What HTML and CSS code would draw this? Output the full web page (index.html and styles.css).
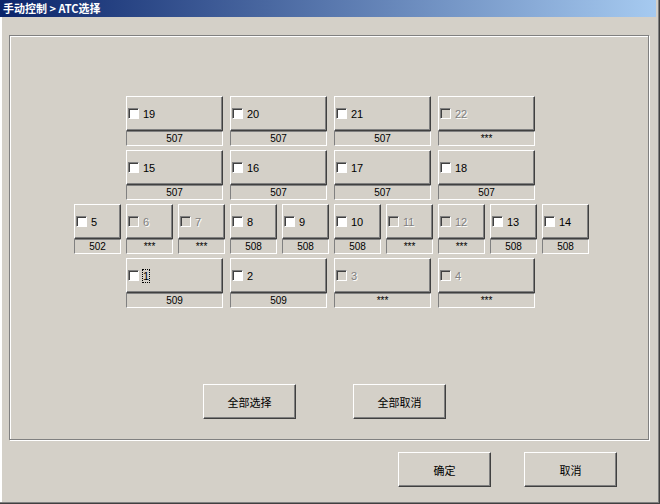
FILE: index.html
```html
<!DOCTYPE html>
<html>
<head>
<meta charset="utf-8">
<link rel="stylesheet" href="styles.css">
</head>
<body>
<div class="window">
  <div class="titlebar">手动控制 &gt; ATC选择</div>
  <div class="panel">
    <div class="grid">
      <div class="row big">
        <div class="cell"><div class="btn"><span class="cb"></span><span class="num">19</span></div><div class="lbl">507</div></div>
        <div class="cell"><div class="btn"><span class="cb"></span><span class="num">20</span></div><div class="lbl">507</div></div>
        <div class="cell"><div class="btn"><span class="cb"></span><span class="num">21</span></div><div class="lbl">507</div></div>
        <div class="cell off"><div class="btn"><span class="cb"></span><span class="num">22</span></div><div class="lbl">***</div></div>
      </div>
      <div class="row big">
        <div class="cell"><div class="btn"><span class="cb"></span><span class="num">15</span></div><div class="lbl">507</div></div>
        <div class="cell"><div class="btn"><span class="cb"></span><span class="num">16</span></div><div class="lbl">507</div></div>
        <div class="cell"><div class="btn"><span class="cb"></span><span class="num">17</span></div><div class="lbl">507</div></div>
        <div class="cell"><div class="btn"><span class="cb"></span><span class="num">18</span></div><div class="lbl">507</div></div>
      </div>
      <div class="row small">
        <div class="cell"><div class="btn"><span class="cb"></span><span class="num">5</span></div><div class="lbl">502</div></div>
        <div class="cell off"><div class="btn"><span class="cb"></span><span class="num">6</span></div><div class="lbl">***</div></div>
        <div class="cell off"><div class="btn"><span class="cb"></span><span class="num">7</span></div><div class="lbl">***</div></div>
        <div class="cell"><div class="btn"><span class="cb"></span><span class="num">8</span></div><div class="lbl">508</div></div>
        <div class="cell"><div class="btn"><span class="cb"></span><span class="num">9</span></div><div class="lbl">508</div></div>
        <div class="cell"><div class="btn"><span class="cb"></span><span class="num">10</span></div><div class="lbl">508</div></div>
        <div class="cell off"><div class="btn"><span class="cb"></span><span class="num">11</span></div><div class="lbl">***</div></div>
        <div class="cell off"><div class="btn"><span class="cb"></span><span class="num">12</span></div><div class="lbl">***</div></div>
        <div class="cell"><div class="btn"><span class="cb"></span><span class="num">13</span></div><div class="lbl">508</div></div>
        <div class="cell"><div class="btn"><span class="cb"></span><span class="num">14</span></div><div class="lbl">508</div></div>
      </div>
      <div class="row big">
        <div class="cell"><div class="btn"><span class="cb"></span><span class="num focus">1</span></div><div class="lbl">509</div></div>
        <div class="cell"><div class="btn"><span class="cb"></span><span class="num">2</span></div><div class="lbl">509</div></div>
        <div class="cell off"><div class="btn"><span class="cb"></span><span class="num">3</span></div><div class="lbl">***</div></div>
        <div class="cell off"><div class="btn"><span class="cb"></span><span class="num">4</span></div><div class="lbl">***</div></div>
      </div>
    </div>
    <div class="actions">
      <div class="pbtn">全部选择</div>
      <div class="pbtn">全部取消</div>
    </div>
  </div>
  <div class="footer">
    <div class="pbtn">确定</div>
    <div class="pbtn">取消</div>
  </div>
</div>
</body>
</html>
```

FILE: styles.css
```css
html, body {
  margin: 0;
  padding: 0;
  background: #d4d0c8;
}
body {
  width: 660px;
  height: 504px;
  overflow: hidden;
  font-family: "Liberation Sans", "Noto Sans CJK SC", sans-serif;
  font-size: 11px;
  color: #000;
}
.window {
  width: 660px;
  height: 504px;
  box-sizing: border-box;
  background: #d4d0c8;
  border-right: 1px solid #404040;
  border-bottom: 1px solid #404040;
  box-shadow: inset -1px -1px #808080, inset 2px 0 #fff;
  display: flex;
  flex-direction: column;
}
.titlebar {
  height: 17px;
  margin-right: 3px;
  background: linear-gradient(to right, #0a246a, #a6caf0);
  color: #fff;
  font-weight: bold;
  font-size: 11px;
  line-height: 16px;
  padding-left: 3px;
  font-family: "Noto Sans CJK SC", sans-serif;
  white-space: nowrap;
}
.panel {
  margin: 18px 0 0 9px;
  width: 640px;
  height: 405px;
  box-sizing: border-box;
  border: 1px solid #808080;
  box-shadow: inset 1px 1px #fff, 1px 1px #fff;
  padding-top: 60px;
  display: flex;
  flex-direction: column;
}
.grid {
  display: flex;
  flex-direction: column;
  gap: 4px;
}
.row {
  display: flex;
}
.row.big {
  margin-left: 116px;
  gap: 7px;
}
.row.big .cell {
  width: 97px;
}
.row.small {
  margin-left: 64px;
  gap: 5px;
}
.row.small .cell {
  width: 47px;
}
.cell {
  display: flex;
  flex-direction: column;
}
.btn {
  height: 35px;
  box-sizing: border-box;
  border-top: 1px solid #fff;
  border-left: 1px solid #fff;
  border-right: 1px solid #404040;
  border-bottom: 1px solid #404040;
  box-shadow: inset -1px -1px #808080;
  display: flex;
  align-items: center;
  padding-left: 1px;
  gap: 4px;
}
.cb {
  width: 11px;
  height: 11px;
  box-sizing: border-box;
  background: #fff;
  border-top: 1px solid #808080;
  border-left: 1px solid #808080;
  border-right: 1px solid #fff;
  border-bottom: 1px solid #fff;
  box-shadow: inset 1px 1px #404040;
  flex: none;
}
.num {
  line-height: 12px;
}
.num.focus {
  outline: 1px dotted #000;
  outline-offset: 0;
}
.lbl {
  height: 15px;
  box-sizing: border-box;
  border-top: 1px solid #808080;
  border-left: 1px solid #808080;
  border-right: 1px solid #fff;
  border-bottom: 1px solid #fff;
  text-align: center;
  line-height: 13px;
  font-size: 10px;
}
.off .cb {
  background: #d4d0c8;
}
.off .num {
  color: #808080;
  text-shadow: 1px 1px #fff;
}
.actions {
  display: flex;
  gap: 57px;
  margin: 76px 0 0 193px;
}
.pbtn {
  width: 93px;
  height: 35px;
  box-sizing: border-box;
  border-top: 1px solid #fff;
  border-left: 1px solid #fff;
  border-right: 1px solid #404040;
  border-bottom: 1px solid #404040;
  box-shadow: inset -1px -1px #808080;
  display: flex;
  align-items: center;
  justify-content: center;
  font-size: 11px;
  font-family: "Noto Sans CJK SC", sans-serif;
}
.footer {
  display: flex;
  gap: 33px;
  margin: 12px 0 0 398px;
}
```
